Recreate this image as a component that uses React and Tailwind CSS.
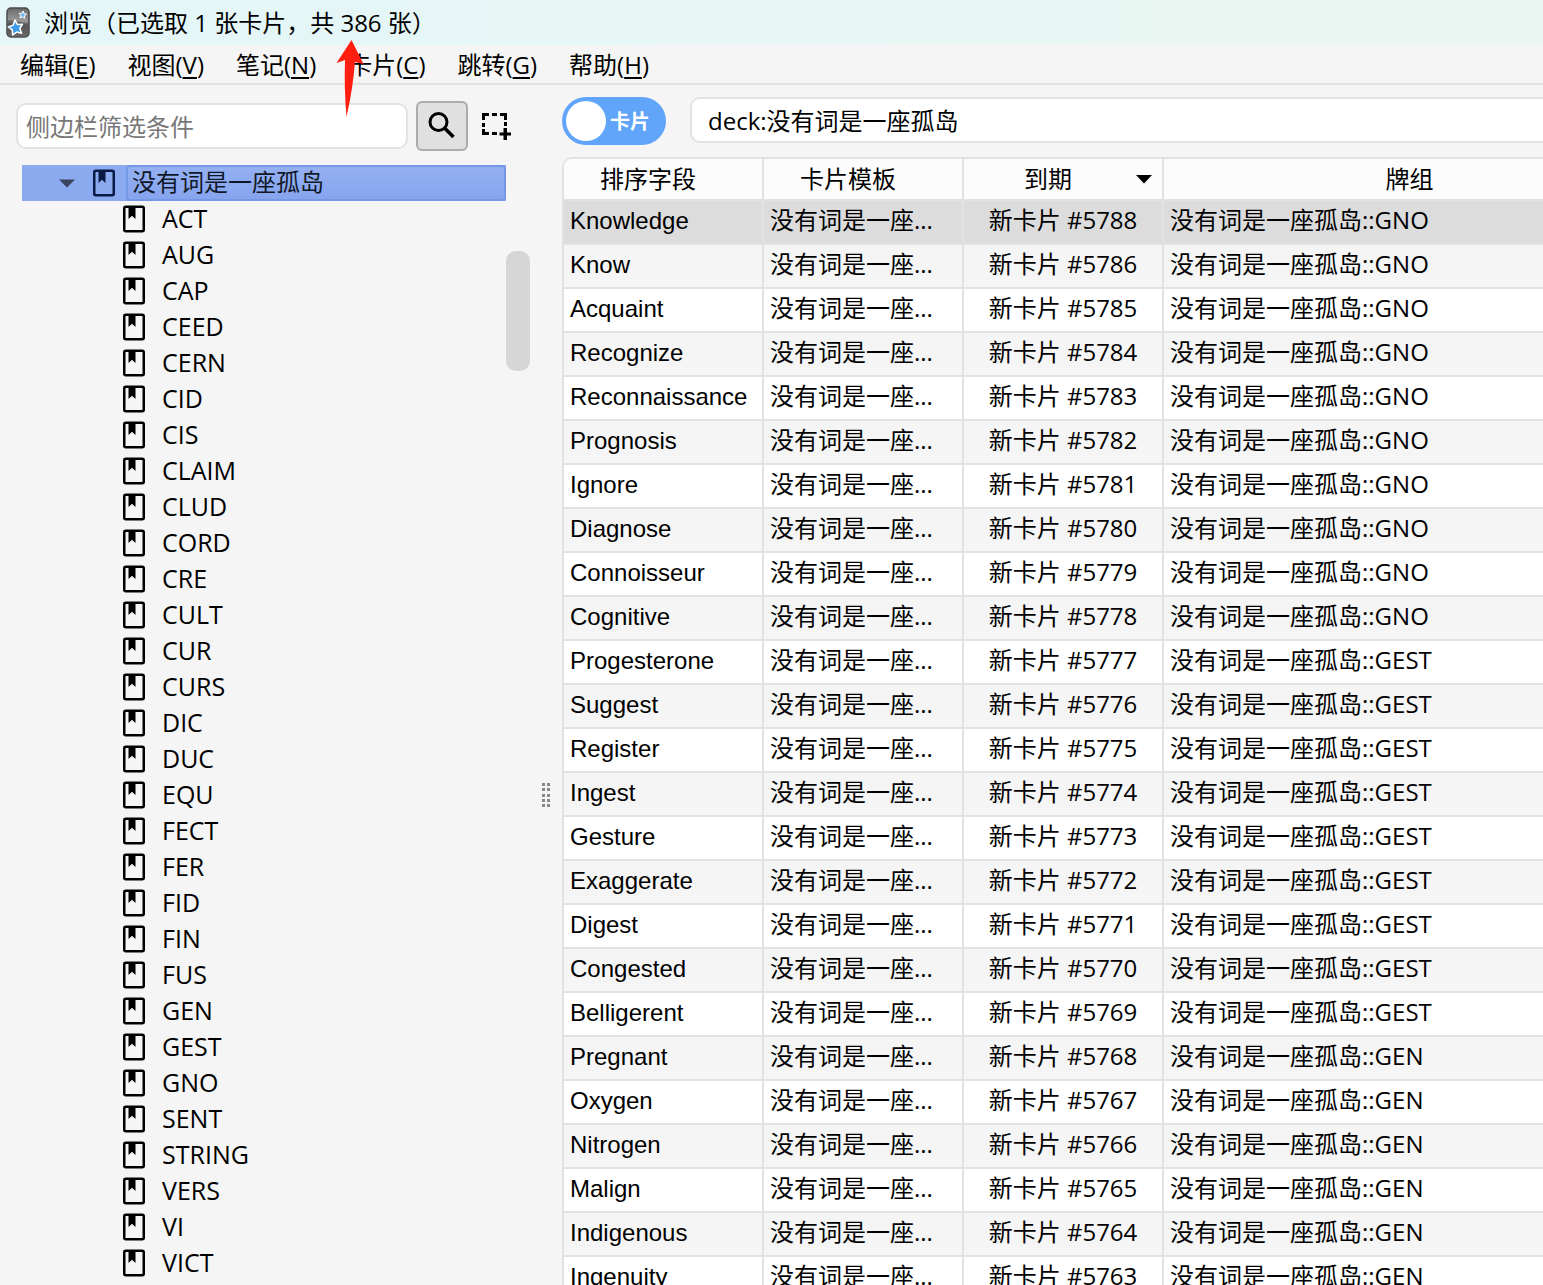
import React from "react";

const menus = [
  { name: "编辑", letter: "E" },
  { name: "视图", letter: "V" },
  { name: "笔记", letter: "N" },
  { name: "卡片", letter: "C" },
  { name: "跳转", letter: "G" },
  { name: "帮助", letter: "H" },
];

const decks = [
  "ACT", "AUG", "CAP", "CEED", "CERN", "CID", "CIS", "CLAIM", "CLUD", "CORD",
  "CRE", "CULT", "CUR", "CURS", "DIC", "DUC", "EQU", "FECT", "FER", "FID",
  "FIN", "FUS", "GEN", "GEST", "GNO", "SENT", "STRING", "VERS", "VI", "VICT",
];

const cards = [
  { word: "Knowledge", due: 5788, deck: "GNO" },
  { word: "Know", due: 5786, deck: "GNO" },
  { word: "Acquaint", due: 5785, deck: "GNO" },
  { word: "Recognize", due: 5784, deck: "GNO" },
  { word: "Reconnaissance", due: 5783, deck: "GNO" },
  { word: "Prognosis", due: 5782, deck: "GNO" },
  { word: "Ignore", due: 5781, deck: "GNO" },
  { word: "Diagnose", due: 5780, deck: "GNO" },
  { word: "Connoisseur", due: 5779, deck: "GNO" },
  { word: "Cognitive", due: 5778, deck: "GNO" },
  { word: "Progesterone", due: 5777, deck: "GEST" },
  { word: "Suggest", due: 5776, deck: "GEST" },
  { word: "Register", due: 5775, deck: "GEST" },
  { word: "Ingest", due: 5774, deck: "GEST" },
  { word: "Gesture", due: 5773, deck: "GEST" },
  { word: "Exaggerate", due: 5772, deck: "GEST" },
  { word: "Digest", due: 5771, deck: "GEST" },
  { word: "Congested", due: 5770, deck: "GEST" },
  { word: "Belligerent", due: 5769, deck: "GEST" },
  { word: "Pregnant", due: 5768, deck: "GEN" },
  { word: "Oxygen", due: 5767, deck: "GEN" },
  { word: "Nitrogen", due: 5766, deck: "GEN" },
  { word: "Malign", due: 5765, deck: "GEN" },
  { word: "Indigenous", due: 5764, deck: "GEN" },
  { word: "Ingenuity", due: 5763, deck: "GEN" },
];

const AppIcon = () => (
  <svg width="24" height="32" viewBox="0 0 24 32" className="shrink-0">
    <defs>
      <linearGradient id="shell" x1="0" y1="0" x2="0" y2="1">
        <stop offset="0" stopColor="#6a6a6a" />
        <stop offset="0.45" stopColor="#9a9a9a" />
        <stop offset="0.55" stopColor="#666666" />
        <stop offset="1" stopColor="#8a8a8a" />
      </linearGradient>
    </defs>
    <rect x="1" y="1" width="22" height="29" rx="4" fill="url(#shell)" stroke="#4a4a4a" strokeWidth="1.5" />
    <path d="M2 13 Q14 13 22 19 V27 Q22 29 20 29 H4 Q2 29 2 27 Z" fill="#3f3f3f" opacity="0.45" />
    <path
      d="M9 13 L11.3 17.4 L16.4 17.3 L13.8 21.5 L15.6 26.3 L10.7 25.1 L6.6 28 L6.3 22.9 L2.3 19.9 L7.1 18.2 Z"
      fill="#3d9be9" stroke="#ffffff" strokeWidth="1.5" strokeLinejoin="round"
    />
    <path
      d="M17.2 4 L17.9 6.5 L20.5 7.2 L18.5 8.7 L18.6 11.3 L16.5 9.9 L14 10.8 L14.8 8.3 L13.2 6.3 L15.8 6.3 Z"
      fill="#6cb8f2" stroke="#ffffff" strokeWidth="1" strokeLinejoin="round"
    />
  </svg>
);

const DeckIcon = ({ className }) => (
  <svg width="22" height="28" viewBox="0 0 22 28" fill="none" className={className}>
    <rect x="1.25" y="1.75" width="19.5" height="24.5" rx="1.5" stroke="currentColor" strokeWidth="2.5" />
    <path d="M5.5 2 H12.5 V14 L9 10.8 L5.5 14 Z" fill="currentColor" />
  </svg>
);

const SearchIcon = () => (
  <svg width="28" height="28" viewBox="0 0 28 28" fill="none" stroke="#000000">
    <circle cx="10.5" cy="10" r="8.5" strokeWidth="3" />
    <path d="M16.5 16 L25.5 25" strokeWidth="3.5" />
  </svg>
);

const SelectIcon = () => (
  <svg width="30" height="28" viewBox="0 0 30 28" fill="#000000">
    <path d="M0 1h7v3H3v4H0z M10 1h5v3h-5z M18 1h7v7h-3V4h-4z M0 11h3v4H0z M22 10h3v4h-3z M0 17h3v3h4v3H0z M10 20h5v3h-5z" />
    <path d="M21.5 16h3.5v4.500h4v3H25v4.500h-3.500V23.500H17.500v-3h4z" />
  </svg>
);

const TitleBar = () => (
  <header className="flex h-[45px] items-center gap-3.5 bg-linear-to-r from-[#e4f6f8] to-[#eaf6f1] pl-1.5">
    <AppIcon />
    <h1 className="whitespace-pre text-[24px] leading-8">浏览（已选取 1 张卡片，共 386 张）</h1>
  </header>
);

const MenuBar = () => (
  <nav className="flex h-10 items-center gap-8 border-b-2 border-[#e2e2e2] pl-5 pt-0.5">
    {menus.map((menu) => (
      <button key={menu.letter} className="whitespace-nowrap leading-8">
        {menu.name}(<span className="underline decoration-2 underline-offset-3">{menu.letter}</span>)
      </button>
    ))}
  </nav>
);

const Sidebar = () => (
  <aside className="flex w-[530px] shrink-0 flex-col pl-4 pt-4">
    <div className="flex h-[50px] items-center">
      <input
        type="text"
        aria-label="侧边栏筛选条件"
        placeholder="侧边栏筛选条件"
        className="h-[46px] w-[392px] rounded-[10px] border-2 border-[#e2e2e2] bg-white px-2 outline-none placeholder:text-[#777777]"
      />
      <button
        aria-label="搜索"
        className="ml-2 flex h-[50px] w-[52px] items-center justify-center rounded-md border-2 border-[#ababab] bg-[#e0e0e0]"
      >
        <SearchIcon />
      </button>
      <button aria-label="选择" className="ml-3.5 flex">
        <SelectIcon />
      </button>
    </div>
    <div className="mt-3.5 flex pl-1.5">
      <ul className="min-w-0 flex-1">
        <li className="flex h-9 items-center bg-[#8caaf0]">
          <svg width="16" height="9" viewBox="0 0 16 9" className="ml-[37px]">
            <path d="M0 0.500 H16 L8 8.500 Z" fill="#3a455c" />
          </svg>
          <DeckIcon className="ml-[18px] text-[#0b1a45]" />
          <span className="ml-[11px] flex h-9 flex-1 items-center rounded-sm border-2 border-[#7497e6] bg-linear-to-b from-[#95b1f3] to-[#86a4ee] pb-0.5 pl-1 text-[#101828]">
            没有词是一座孤岛
          </span>
        </li>
        {decks.map((deck) => (
          <li key={deck} className="flex h-9 items-center gap-[17px] pl-[101px]">
            <DeckIcon />
            <span className="pb-0.5 text-[25px] leading-8">{deck}</span>
          </li>
        ))}
      </ul>
      <div className="w-6 pt-[86px]">
        <div className="h-[120px] rounded-[10px] bg-[#d6d6d6]" />
      </div>
    </div>
  </aside>
);

const Splitter = () => (
  <div className="flex w-8 shrink-0 justify-center pt-[697px]">
    <svg width="10" height="26" viewBox="0 0 10 26" fill="#888888">
      {[0, 5, 11, 16, 21].map((y) => (
        <React.Fragment key={y}>
          <rect x="1" y={y + 1} width="3" height="3" />
          <rect x="6" y={y + 1} width="3" height="3" />
        </React.Fragment>
      ))}
    </svg>
  </div>
);

const CardTable = () => (
  <div className="mt-3 overflow-hidden rounded-tl-[10px] border-l-2 border-t-2 border-[#e2e2e2]">
    <table className="w-[calc(100%+142px)] table-fixed border-separate border-spacing-0 whitespace-nowrap text-left">
      <thead>
        <tr className="h-[42px] bg-[#fcfcfc] text-center">
          <th className="w-[200px] border-b-2 border-r-2 border-[#e2e2e2] p-0 pr-[30px] font-normal leading-8">排序字段</th>
          <th className="w-[200px] border-b-2 border-r-2 border-[#e2e2e2] p-0 pr-[30px] font-normal leading-8">卡片模板</th>
          <th className="w-[200px] border-b-2 border-r-2 border-[#e2e2e2] p-0 font-normal leading-8">
            <div className="flex items-center pr-2.5">
              <span className="flex-1 pr-1">到期</span>
              <svg width="16" height="9" viewBox="0 0 16 9">
                <path d="M0 0 H16 L8 8.500 Z" fill="#000000" />
              </svg>
            </div>
          </th>
          <th className="border-b-2 border-[#e2e2e2] p-0 pr-[30px] font-normal leading-8">牌组</th>
        </tr>
      </thead>
      <tbody>
        {cards.map((card, i) => (
          <tr
            key={card.due}
            className={`h-11 ${i === 0 ? "bg-[#dcdcdc]" : i % 2 === 1 ? "bg-[#f5f5f5]" : "bg-white"}`}
          >
            <td className="border-b-2 border-r-2 border-[#e2e2e2] p-0 pb-0.5 pl-1.5 font-['Liberation_Sans',sans-serif] leading-8">
              {card.word}
            </td>
            <td className="border-b-2 border-r-2 border-[#e2e2e2] p-0 pb-1 pl-1.5 leading-8">没有词是一座...</td>
            <td className="border-b-2 border-r-2 border-[#e2e2e2] p-0 pb-1 text-center leading-8">新卡片 #{card.due}</td>
            <td className="border-b-2 border-[#e2e2e2] p-0 pb-1 pl-1.5 leading-8">没有词是一座孤岛::{card.deck}</td>
          </tr>
        ))}
      </tbody>
    </table>
  </div>
);

const Browser = () => (
  <main className="flex min-w-0 flex-1 flex-col pt-3">
    <div className="flex items-start gap-6">
      <label className="flex h-12 w-[104px] shrink-0 cursor-pointer items-center rounded-full bg-[#60a5fa] pl-1">
        <input type="checkbox" role="switch" className="size-10 appearance-none rounded-full bg-white" />
        <span className="pl-1 pt-0.5 text-[20px] font-bold leading-8 text-white">卡片</span>
      </label>
      <input
        type="text"
        aria-label="搜索卡片"
        defaultValue="deck:没有词是一座孤岛"
        className="h-[46px] min-w-0 flex-1 rounded-l-[10px] border-2 border-r-0 border-[#e2e2e2] bg-white px-4 pb-0.5 outline-none"
      />
    </div>
    <CardTable />
  </main>
);

export default function App() {
  return (
    <div
      lang="zh-CN"
      className="relative h-screen overflow-hidden bg-[#f5f5f5] font-['Open_Sans','Noto_Sans_CJK_SC',sans-serif] text-[24px] text-black"
    >
      <TitleBar />
      <MenuBar />
      <div className="flex">
        <Sidebar />
        <Splitter />
        <Browser />
      </div>
      {/* Arrow pointing at the card count */}
      <svg width="28" height="78" viewBox="0 0 28 78" className="pointer-events-none absolute left-[336px] top-10">
        <path d="M15.500 0 L27.500 24 L19 22 Q17 48 10.500 77 Q8 48 9 20 L0.500 23 Z" fill="#ff1e10" />
      </svg>
    </div>
  );
}
